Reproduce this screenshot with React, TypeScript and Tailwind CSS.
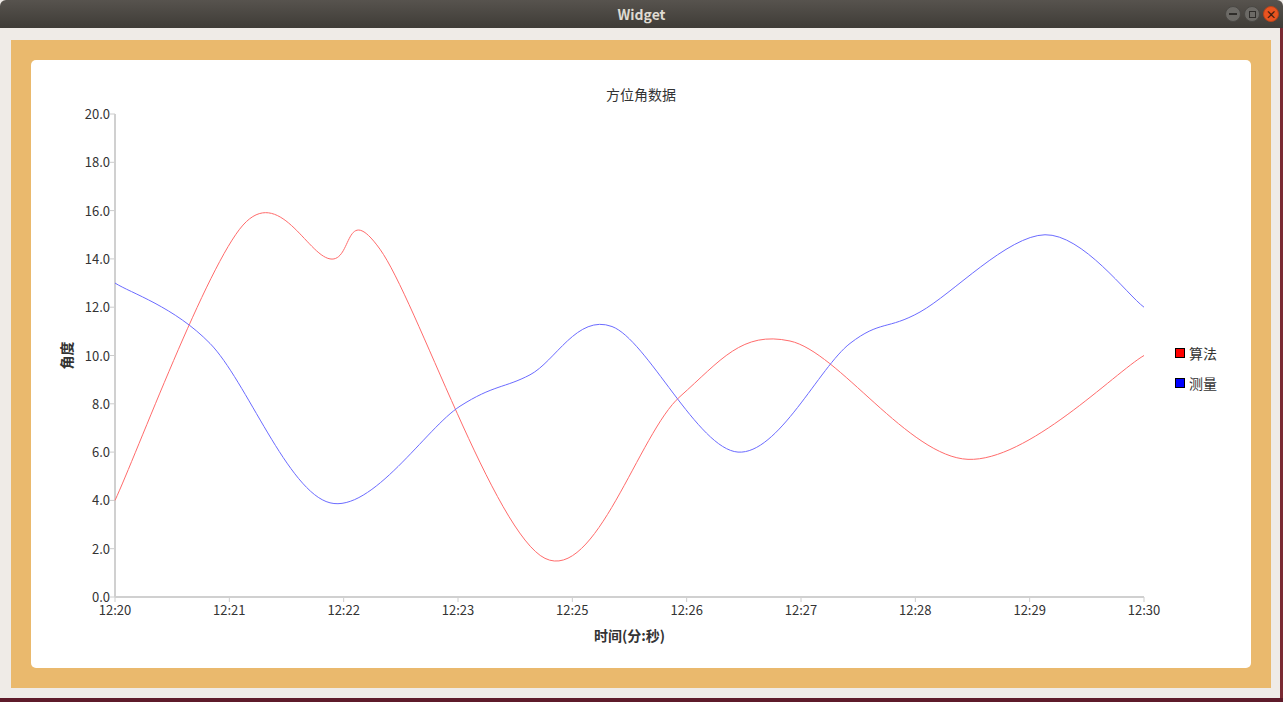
import React from "react";

const X0 = 84, X1 = 1113, Y0 = 537, Y1 = 54; // within card (card at 31,60)
const sx = (i: number) => X0 + ((X1 - X0) / 9) * i;
const sy = (v: number) => Y0 - ((Y0 - Y1) / 20) * v;

const red: [number, number][] = [[115, 4], [243, 15.4], [330, 14], [380, 14.4], [545, 1.6], [680, 8.3], [790, 10.6], [968, 5.7], [1144, 10]];
const blue: [number, number][] = [[115, 13], [210, 10.5], [330, 3.9], [460, 7.9], [530, 9.2], [612, 11.2], [738, 6], [850, 10.5], [920, 11.8], [1045, 15], [1144, 12]];

function spline(vals: [number, number][]) {
  const p = vals.map(([x, v]) => [x - 31, sy(v)]);
  let d = `M${p[0][0]},${p[0][1]}`;
  for (let i = 0; i < p.length - 1; i++) {
    const p0 = p[i - 1] || p[i], p1 = p[i], p2 = p[i + 1], p3 = p[i + 2] || p[i + 1];
    const c1 = [p1[0] + (p2[0] - p0[0]) / 6, p1[1] + (p2[1] - p0[1]) / 6];
    const c2 = [p2[0] - (p3[0] - p1[0]) / 6, p2[1] - (p3[1] - p1[1]) / 6];
    d += ` C${c1[0]},${c1[1]} ${c2[0]},${c2[1]} ${p2[0]},${p2[1]}`;
  }
  return d;
}

const xl = ["12:20", "12:21", "12:22", "12:23", "12:25", "12:26", "12:27", "12:28", "12:29", "12:30"];
const font = "'Noto Sans CJK SC', 'Liberation Sans', sans-serif";

export default function App() {
  return (
    <div className="w-[1283px] h-[702px] bg-[#efebe7] flex flex-col overflow-hidden" style={{ fontFamily: font }}>
      <div className="h-[28px] bg-gradient-to-b from-[#57534e] to-[#3f3c37] flex items-center relative rounded-t-[6px]">
        <div className="flex-1 text-center text-[#dfdbd2] text-[14px] font-bold">Widget</div>
        <div className="absolute right-[4px] top-[6px] flex gap-[3px]">
          <div className="w-[16px] h-[16px] rounded-full bg-[#6c6a66] border border-[#4a4844] flex items-center justify-center"><div className="w-[8px] h-[1.5px] bg-[#2f2d2a]" /></div>
          <div className="w-[16px] h-[16px] rounded-full bg-[#6c6a66] border border-[#4a4844] flex items-center justify-center"><div className="w-[7px] h-[7px] border border-[#2f2d2a]" /></div>
          <div className="w-[16px] h-[16px] rounded-full bg-[#e95420] border border-[#b8431a] flex items-center justify-center text-[#3a1a0e] text-[11px] leading-none font-bold">×</div>
        </div>
      </div>
      <div className="flex-1 flex">
        <div className="flex-1 pt-[12px] pl-[11px] pr-[9px] pb-[10px]">
          <div className="h-full bg-[#eab96d] p-[20px]">
            <div className="w-[1220px] h-[608px] bg-white rounded-[5px]">
              <svg width="1220" height="608" style={{ fontFamily: font }}>
                <text x="610" y="40" textAnchor="middle" fontSize="14" fill="#333">方位角数据</text>
                {Array.from({ length: 11 }).map((_, i) => (
                  <g key={i}>
                    <line x1={X0 - 5} x2={X0} y1={sy(i * 2)} y2={sy(i * 2)} stroke="#ccc" />
                    <text x={X0 - 5} y={sy(i * 2) + 5} textAnchor="end" fontSize="13" fill="#333">{(i * 2).toFixed(1)}</text>
                  </g>
                ))}
                {xl.map((l, i) => (
                  <g key={l}>
                    <line x1={sx(i)} x2={sx(i)} y1={Y0} y2={Y0 + 5} stroke="#ccc" />
                    <text x={sx(i)} y={Y0 + 18} textAnchor="middle" fontSize="13" fill="#333">{l}</text>
                  </g>
                ))}
                <line x1={X0} x2={X0} y1={Y1} y2={Y0} stroke="#d0d0d0" strokeWidth="2" />
                <line x1={X0} x2={X1} y1={Y0} y2={Y0} stroke="#d0d0d0" strokeWidth="2" />
                <text x="0" y="0" transform={`translate(41,${sy(10)}) rotate(-90)`} textAnchor="middle" fontSize="14" fontWeight="bold" fill="#333">角度</text>
                <text x={(X0 + X1) / 2} y="581" textAnchor="middle" fontSize="14" fontWeight="bold" fill="#333">时间(分:秒)</text>
                <path d={spline(red)} fill="none" stroke="#ff6b6b" strokeWidth="1" />
                <path d={spline(blue)} fill="none" stroke="#6b6bff" strokeWidth="1" />
                <rect x="1144.5" y="288.5" width="9" height="9" fill="#f00" stroke="#000" />
                <text x="1158" y="299" fontSize="14" fill="#333">算法</text>
                <rect x="1144.5" y="318.5" width="9" height="9" fill="#00f" stroke="#000" />
                <text x="1158" y="329" fontSize="14" fill="#333">测量</text>
              </svg>
            </div>
          </div>
        </div>
        <div className="w-[3px] bg-[#7a2a33]" />
      </div>
      <div className="h-[4px] bg-[#5e1b2a]" />
    </div>
  );
}
